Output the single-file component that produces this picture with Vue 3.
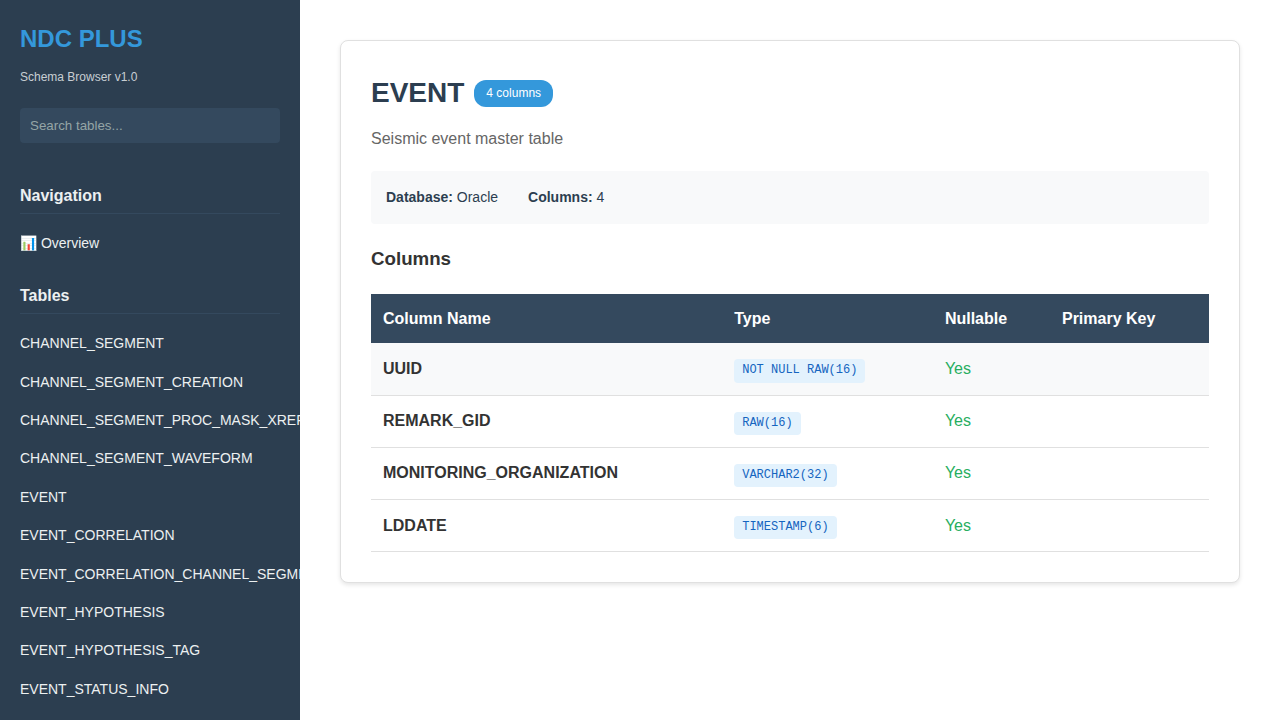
<script setup>
const tables = ['CHANNEL_SEGMENT','CHANNEL_SEGMENT_CREATION','CHANNEL_SEGMENT_PROC_MASK_XREF','CHANNEL_SEGMENT_WAVEFORM','EVENT','EVENT_CORRELATION','EVENT_CORRELATION_CHANNEL_SEGMENT','EVENT_HYPOTHESIS','EVENT_HYPOTHESIS_TAG','EVENT_STATUS_INFO']
const rows = [
  { name: 'UUID', type: 'NOT NULL RAW(16)' },
  { name: 'REMARK_GID', type: 'RAW(16)' },
  { name: 'MONITORING_ORGANIZATION', type: 'VARCHAR2(32)' },
  { name: 'LDDATE', type: 'TIMESTAMP(6)' },
]
</script>

<template>
  <div class="layout">
    <aside class="sidebar">
      <h1 class="logo">NDC PLUS</h1>
      <p class="version">Schema Browser v1.0</p>
      <input class="search" type="text" placeholder="Search tables..." />
      <h3 class="nav-title nav-first">Navigation</h3>
      <a class="nav-item">📊 Overview</a>
      <h3 class="nav-title nav-second">Tables</h3>
      <a v-for="t in tables" :key="t" class="nav-item table-item">{{ t }}</a>
    </aside>
    <main class="main">
      <section class="card">
        <div class="title-row">
          <h2 class="title">EVENT</h2>
          <span class="badge">4 columns</span>
        </div>
        <p class="desc">Seismic event master table</p>
        <div class="info">
          <span><strong>Database:</strong> Oracle</span>
          <span><strong>Columns:</strong> 4</span>
        </div>
        <h3 class="section">Columns</h3>
        <table class="cols">
          <colgroup>
            <col class="c1" /><col class="c2" /><col class="c3" /><col class="c4" />
          </colgroup>
          <thead>
            <tr><th>Column Name</th><th>Type</th><th>Nullable</th><th>Primary Key</th></tr>
          </thead>
          <tbody>
            <tr v-for="r in rows" :key="r.name">
              <td class="name">{{ r.name }}</td>
              <td><code class="type">{{ r.type }}</code></td>
              <td class="yes">Yes</td>
              <td></td>
            </tr>
          </tbody>
        </table>
      </section>
    </main>
  </div>
</template>

<style>
html, body { margin: 0; overflow: hidden; background: #fff; }
</style>

<style scoped>
.layout {
  display: flex;
  height: 720px;
  overflow: hidden;
  font-family: "Liberation Sans", Arial, sans-serif;
  line-height: 1.6;
  color: #333;
}
.sidebar {
  box-sizing: border-box;
  flex: 0 0 300px;
  width: 300px;
  height: 720px;
  padding: 20px;
  overflow: hidden;
  background: #2c3e50;
  color: #ecf0f1;
}
.logo {
  margin: 0 0 10px;
  font-size: 24px;
  font-weight: 700;
  color: #3498db;
}
.version {
  margin: 0 0 20px;
  font-size: 12px;
  color: #c8ced3;
}
.search {
  display: block;
  box-sizing: border-box;
  width: 100%;
  padding: 10px;
  border: none;
  border-radius: 4px;
  background: #34495e;
  color: #ecf0f1;
  font-family: inherit;
  font-size: 13.333px;
  line-height: normal;
  outline: none;
}
.search::placeholder { color: #95a5a6; opacity: 1; }
.nav-title {
  margin: 0;
  padding-bottom: 5px;
  border-bottom: 1px solid #34495e;
  font-size: 16px;
  font-weight: 700;
  color: #ecf0f1;
}
.nav-first { margin-top: 40px; margin-bottom: 10px; }
.nav-second { margin-top: 20px; margin-bottom: 10px; }
.nav-item {
  display: block;
  padding: 8px 0;
  font-size: 14px;
  white-space: nowrap;
  color: #ecf0f1;
}
.main {
  flex: 1;
  min-width: 0;
  padding: 40px;
}
.card {
  box-sizing: border-box;
  width: 900px;
  padding: 30px;
  border: 1px solid #e0e0e0;
  border-radius: 8px;
  background: #fff;
  box-shadow: 0 2px 4px rgba(0, 0, 0, 0.1);
}
.title-row {
  display: flex;
  align-items: center;
  gap: 10px;
}
.title {
  margin: 0;
  font-size: 28px;
  font-weight: 700;
  color: #2c3e50;
}
.badge {
  padding: 4px 12px;
  border-radius: 12px;
  background: #3498db;
  color: #fff;
  font-size: 12px;
}
.desc {
  margin: 10px 0 20px;
  font-size: 16px;
  color: #666;
}
.info {
  display: flex;
  gap: 30px;
  padding: 15px;
  border-radius: 4px;
  background: #f8f9fa;
  font-size: 14px;
  color: #2c3e50;
}
.info strong { font-weight: 700; }
.section {
  margin: 20px 0;
  font-size: 18.72px;
  font-weight: 700;
  color: #333;
}
.cols {
  width: 838px;
  border-collapse: collapse;
  table-layout: fixed;
}
.c1 { width: 351.2px; }
.c2 { width: 210.7px; }
.c3 { width: 117.1px; }
.c4 { width: 159px; }
.cols th {
  padding: 12px;
  background: #34495e;
  color: #fff;
  font-size: 16px;
  font-weight: 700;
  text-align: left;
}
.cols td {
  padding: 12px;
  border-bottom: 1px solid #e0e0e0;
  font-size: 16px;
}
.cols tbody tr:first-child td { background: #f8f9fa; }
.cols td.name { font-weight: 700; }
.cols td.yes { color: #27ae60; }
.type {
  display: inline-block;
  padding: 2px 8px;
  border-radius: 4px;
  background: #e3f2fd;
  color: #1565c0;
  font-family: "Liberation Mono", monospace;
  font-size: 12px;
}
</style>
